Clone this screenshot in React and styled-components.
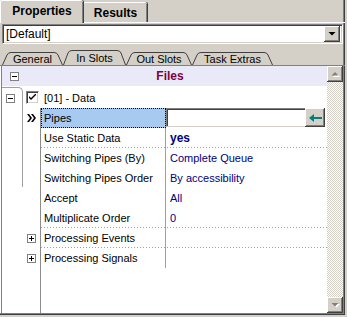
import React from "react"
import styled, { createGlobalStyle } from "styled-components"

const GlobalStyle = createGlobalStyle`
  html, body {
    margin: 0;
    padding: 0;
    background: #d4d0c8;
  }
  body {
    font-family: "Liberation Sans", Arial, sans-serif;
    font-size: 11px;
    color: #000;
  }
`

const Window = styled.div`
  width: 345px;
  height: 315px;
  background: #d4d0c8;
  box-shadow: inset -1px -1px 0 #404040, inset -2px -2px 0 #808080;
  display: flex;
  flex-direction: column;
  box-sizing: border-box;
`

const TopBar = styled.div`
  height: 22px;
  display: flex;
  align-items: flex-end;
  border-bottom: 1px solid #fff;
`

const TopTab = styled.div`
  position: relative;
  box-sizing: border-box;
  width: ${p => p.$w}px;
  height: ${p => (p.$active ? 23 : 20)}px;
  margin-bottom: ${p => (p.$active ? -1 : 0)}px;
  z-index: ${p => (p.$active ? 1 : 0)};
  background: #d4d0c8;
  border-top: 1px solid #fff;
  border-left: 1px solid #fff;
  border-top-left-radius: 2px;
  border-top-right-radius: 2px;
  box-shadow: inset -1px 0 0 #808080, 1px 0 0 #404040;
  display: flex;
  align-items: center;
  justify-content: center;
  padding-bottom: ${p => (p.$active ? 2 : 0)}px;
  font-size: 12px;
  font-weight: bold;
`

const Combo = styled.div`
  margin: 1px 2px 0 2px;
  height: 20px;
  box-sizing: border-box;
  background: #fff;
  border-top: 1px solid #808080;
  border-left: 1px solid #808080;
  border-bottom: 1px solid #fff;
  border-right: 1px solid #fff;
  box-shadow: inset 1px 1px 0 #404040, inset -1px -1px 0 #d4d0c8;
  display: flex;
  align-items: center;
  padding: 0 2px 0 3px;
`

const ComboText = styled.span`
  flex: 1;
  font-size: 12px;
`

const Raised = styled.div`
  box-sizing: border-box;
  background: #d4d0c8;
  box-shadow: inset -1px -1px 0 #404040, inset 1px 1px 0 #fff,
    inset -2px -2px 0 #808080;
  display: flex;
  align-items: center;
  justify-content: center;
  width: ${p => p.$w || 16}px;
  height: ${p => p.$h || 16}px;
  flex-shrink: 0;
`

const SubTabs = styled.div`
  margin-top: 4px;
  height: 17px;
  display: flex;
  align-items: flex-end;
  border-bottom: 1px solid #808080;
  padding-left: 2px;
`

const SubTabBox = styled.div`
  position: relative;
  width: ${p => p.$w}px;
  height: ${p => (p.$active ? 15 : 13)}px;
  display: flex;
  align-items: center;
  justify-content: center;
  font-size: 11px;
  padding-top: 1px;
  box-sizing: border-box;
  span {
    position: relative;
  }
  svg {
    position: absolute;
    left: 0;
    top: 0;
    overflow: visible;
  }
`

const Grid = styled.div`
  flex: 1;
  margin: 0 2px 2px 2px;
  display: flex;
  background: #fff;
  min-height: 0;
  box-shadow: -1px 0 0 #808080, -2px 0 0 #fff;
`

const Sheet = styled.div`
  flex: 1;
  display: flex;
  flex-direction: column;
`

const Header = styled.div`
  height: 21px;
  box-sizing: border-box;
  background: #e9e9f8;
  border-bottom: 1px solid #fff;
  display: flex;
  align-items: center;
  padding-left: 8px;
`

const HeaderTitle = styled.div`
  flex: 1;
  text-align: center;
  font-weight: bold;
  font-size: 12px;
  color: #800040;
  padding-right: 6px;
`

const ToggleBox = styled.div`
  position: relative;
  width: 9px;
  height: 9px;
  box-sizing: border-box;
  border: 1px solid #808080;
  background: #fff;
  flex-shrink: 0;
  &::before {
    content: "";
    position: absolute;
    left: 1px;
    top: 3px;
    width: 5px;
    height: 1px;
    background: #000;
  }
  &::after {
    content: "";
    display: ${p => (p.$plus ? "block" : "none")};
    position: absolute;
    left: 3px;
    top: 1px;
    width: 1px;
    height: 5px;
    background: #000;
  }
`

const Body = styled.div`
  flex: 1;
  display: flex;
  align-items: flex-start;
`

const Gutter = styled.div`
  width: 21px;
  height: ${p => p.$h}px;
  box-sizing: border-box;
  border-top: 1px solid #a0a0a0;
  border-right: 1px solid #a0a0a0;
  border-top-right-radius: 5px;
  padding: 6px 0 0 4px;
`

const Group = styled.div`
  flex: 1;
  align-self: stretch;
  display: flex;
  flex-direction: column;
`

const GroupRow = styled.div`
  height: 21px;
  display: flex;
  align-items: center;
  padding-left: 3px;
  gap: 5px;
`

const CheckBox = styled.div`
  width: 13px;
  height: 13px;
  box-sizing: border-box;
  background: #fff;
  border-top: 1px solid #808080;
  border-left: 1px solid #808080;
  border-bottom: 1px solid #fff;
  border-right: 1px solid #fff;
  box-shadow: inset 1px 1px 0 #404040, inset -1px -1px 0 #d4d0c8;
  display: flex;
  align-items: center;
  justify-content: center;
`

const PropsBody = styled.div`
  flex: 1;
  display: flex;
  flex-direction: column;
  background: linear-gradient(#8c8c8c, #8c8c8c) 17px 0 / 1px 100% no-repeat;
`

const Row = styled.div`
  height: 20px;
  display: flex;
`

const Marker = styled.div`
  width: 18px;
  display: flex;
  align-items: center;
  padding-left: 4px;
  box-sizing: border-box;
`

const Cells = styled.div`
  flex: 1;
  display: flex;
  background: ${p =>
    p.$sep
      ? "repeating-linear-gradient(90deg, #a0a0a0 0 1px, transparent 1px 3px) 0 100% / 100% 1px no-repeat"
      : "none"};
`

const Name = styled.div`
  width: 125px;
  box-sizing: border-box;
  border-right: 1px solid #a4a098;
  padding-left: 3px;
  display: flex;
  align-items: center;
  background: ${p => (p.$selected ? "#a6caf0" : "transparent")};
  outline: ${p => (p.$selected ? "1px dotted #000" : "none")};
  outline-offset: -1px;
`

const Value = styled.div`
  flex: 1;
  display: flex;
  align-items: center;
  padding-left: 4px;
  color: #000080;
  font-weight: ${p => (p.$bold ? "bold" : "normal")};
  font-size: ${p => (p.$bold ? "12px" : "11px")};
`

const Editor = styled.div`
  flex: 1;
  display: flex;
  align-items: stretch;
  padding-right: 2px;
  height: 19px;
`

const EditInput = styled.div`
  flex: 1;
  background: #fff;
  box-sizing: border-box;
  border-top: 1px solid #808080;
  border-left: 1px solid #808080;
  border-bottom: 1px solid #d4d0c8;
  box-shadow: inset 1px 1px 0 #404040;
`

const ScrollBar = styled.div`
  width: 16px;
  display: flex;
  flex-direction: column;
`

const Track = styled.div`
  flex: 1;
  background-color: #fff;
  background-image: repeating-conic-gradient(#d4d0c8 0 25%, #fff 0 50%);
  background-size: 2px 2px;
`

const Arrow = ({ up, color = "#808080", shadow = true }) => (
  <svg width="9" height="6" viewBox="0 0 9 6">
    {shadow && (
      <path
        d={up ? "M1 5 L8 5 L4.5 1.5Z" : "M1 1 L8 1 L4.5 4.5Z"}
        fill="#fff"
        transform="translate(1 1)"
      />
    )}
    <path d={up ? "M0.5 4.5 L7.5 4.5 L4 1Z" : "M0.5 1 L7.5 1 L4 4.5Z"} fill={color} />
  </svg>
)

const SubTab = ({ label, w, active }) => {
  const h = active ? 15 : 13
  const s = 6
  const d = `M0.5 ${h} L${s - 1} 3 Q${s} 0.5 ${s + 3} 0.5 L${w - s - 3} 0.5 Q${w - s} 0.5 ${
    w - s + 1
  } 3 L${w - 0.5} ${h}`
  return (
    <SubTabBox $w={w} $active={active}>
      <svg width={w} height={h + 1}>
        <path d={d} fill="#d4d0c8" stroke="#404040" strokeWidth="1" />
      </svg>
      <span>{label}</span>
    </SubTabBox>
  )
}

const Chevrons = () => (
  <svg width="10" height="8" viewBox="0 0 10 8">
    <path d="M0 0 H2 L5 4 L2 8 H0 L3 4Z M4 0 H6 L9 4 L6 8 H4 L7 4Z" fill="#000" />
  </svg>
)

const rows = [
  { name: "Use Static Data", value: "yes", bold: true, sep: true },
  { name: "Switching Pipes (By)", value: "Complete Queue" },
  { name: "Switching Pipes Order", value: "By accessibility" },
  { name: "Accept", value: "All" },
  { name: "Multiplicate Order", value: "0", sep: true },
  { name: "Processing Events", value: "", plus: true, sep: true },
  { name: "Processing Signals", value: "", plus: true },
]

export default function App() {
  return (
    <>
      <GlobalStyle />
      <Window>
        <TopBar>
          <TopTab $w={83} $active>
            Properties
          </TopTab>
          <TopTab $w={64}>Results</TopTab>
        </TopBar>

        <Combo>
          <ComboText>[Default]</ComboText>
          <Raised $w={16} $h={16}>
            <Arrow color="#000" shadow={false} />
          </Raised>
        </Combo>

        <SubTabs>
          <SubTab label="General" w={61} />
          <SubTab label="In Slots" w={63} active />
          <SubTab label="Out Slots" w={66} />
          <SubTab label="Task Extras" w={81} />
        </SubTabs>

        <Grid>
          <Sheet>
            <Header>
              <ToggleBox />
              <HeaderTitle>Files</HeaderTitle>
            </Header>
            <Body>
              <Gutter $h={100}>
                <ToggleBox />
              </Gutter>
              <Group>
                <GroupRow>
                  <CheckBox>
                    <svg width="7" height="7" viewBox="0 0 7 7">
                      <path d="M0 2 L0 4 L2 6 L7 1 L7 -1 L2 4Z" fill="#000" />
                    </svg>
                  </CheckBox>
                  <span>[01] - Data</span>
                </GroupRow>
                <PropsBody>
                  <Row>
                    <Marker>
                      <Chevrons />
                    </Marker>
                    <Cells>
                      <Name $selected>Pipes</Name>
                      <Editor>
                        <EditInput />
                        <Raised $w={20} $h={19}>
                          <svg width="13" height="8" viewBox="0 0 13 8">
                            <path d="M0 4 L5 0 V3 H13 V5 H5 V8Z" fill="#008080" />
                          </svg>
                        </Raised>
                      </Editor>
                    </Cells>
                  </Row>
                  {rows.map(r => (
                    <Row key={r.name}>
                      <Marker>{r.plus && <ToggleBox $plus />}</Marker>
                      <Cells $sep={r.sep}>
                        <Name>{r.name}</Name>
                        <Value $bold={r.bold}>{r.value}</Value>
                      </Cells>
                    </Row>
                  ))}
                </PropsBody>
              </Group>
            </Body>
          </Sheet>
          <ScrollBar>
            <Raised>
              <Arrow up />
            </Raised>
            <Track />
            <Raised>
              <Arrow />
            </Raised>
          </ScrollBar>
        </Grid>
      </Window>
    </>
  )
}
